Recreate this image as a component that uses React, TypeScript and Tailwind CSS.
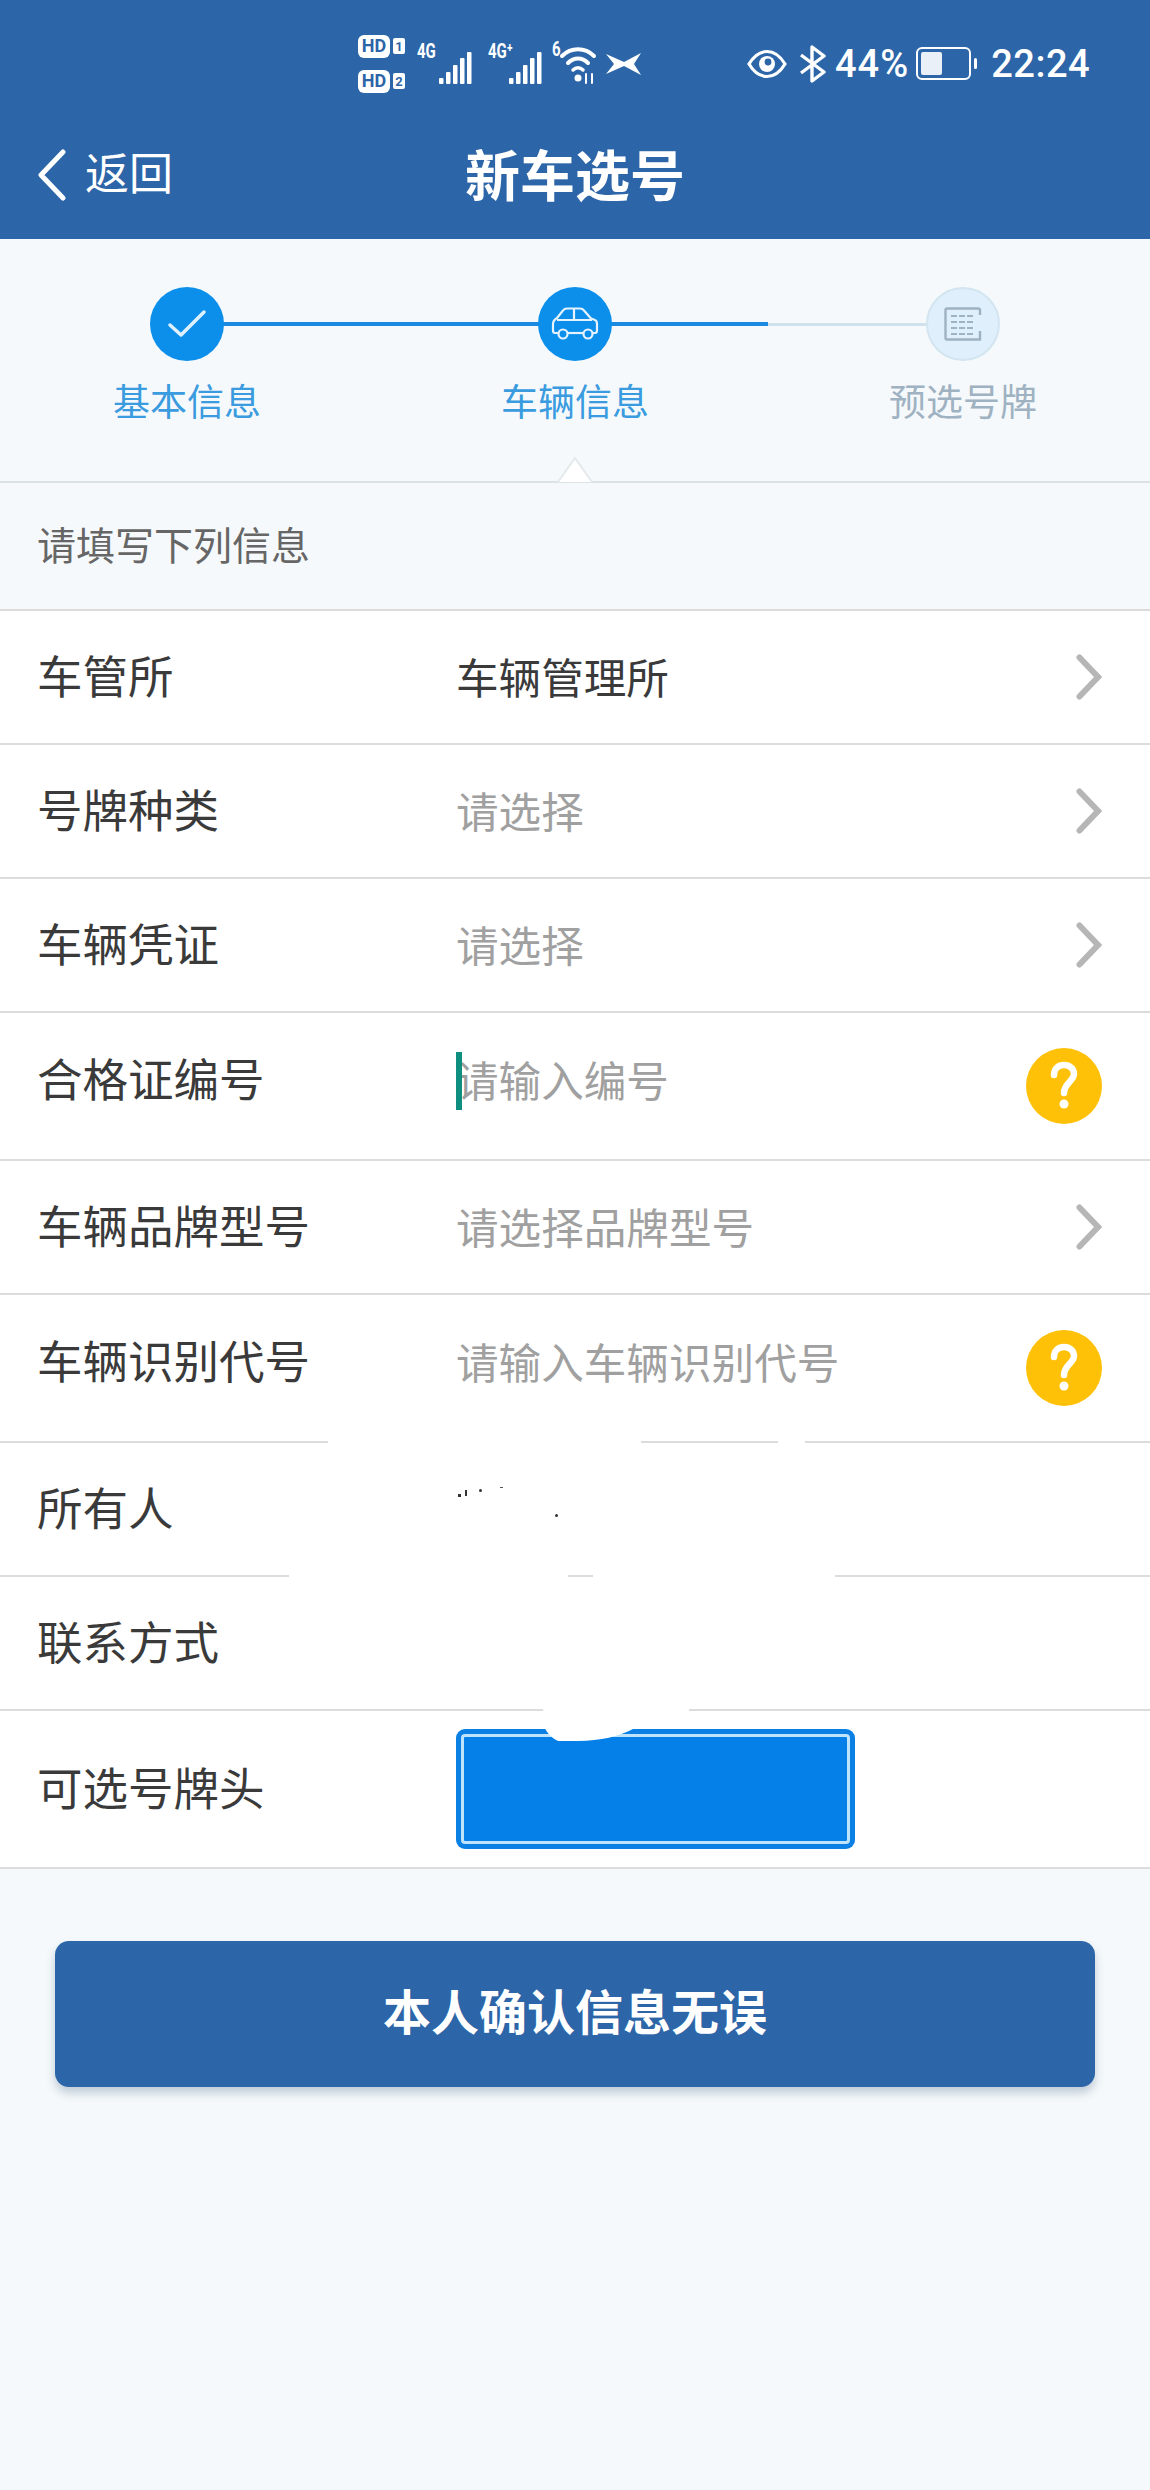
const CJK = "font-['Roboto','Noto_Sans_CJK_SC',sans-serif]";

function Chevron() {
  return (
    <svg width="26" height="46" viewBox="0 0 26 46" fill="none" className="shrink-0">
      <path d="M3.5 3.5 L22 23 L3.5 42.5" stroke="#b6b6b6" strokeWidth="6" strokeLinecap="round" strokeLinejoin="miter" />
    </svg>
  );
}

function Help() {
  return (
    <div className="flex h-[76px] w-[76px] shrink-0 items-center justify-center rounded-full bg-[#ffc107]">
      <svg width="30" height="50" viewBox="0 0 30 50" fill="none">
        <path d="M5 14 C5 7 10 4 15 4 C21 4 25 8 25 13 C25 20 15 22 15 32" stroke="#fff" strokeWidth="6.5" strokeLinecap="round" />
        <circle cx="15" cy="43" r="4.5" fill="#fff" />
      </svg>
    </div>
  );
}

type RowProps = {
  label: string;
  value?: string;
  dark?: boolean;
  chevron?: boolean;
  help?: boolean;
  cursor?: boolean;
  h: string;
};

function Row({ label, value, dark, chevron, help, cursor, h }: RowProps) {
  return (
    <div className={`relative flex items-center border-b-2 border-[#dcdcdc] bg-white pl-[37px] pr-[48px] ${h}`}>
      <div className={`w-[419px] shrink-0 text-[45.5px] leading-[60px] text-[#3a3a3a] ${help ? "-mt-[9px]" : "mt-[3px]"}`}>{label}</div>
      <div className={`flex-1 text-[42.6px] leading-[60px] ${dark ? "text-[#3a3a3a]" : "text-[#a0a0a0]"} ${help ? "-mt-[9px]" : "mt-[3px]"}`}>{value}</div>
      {chevron && <Chevron />}
      {help && <Help />}
      {cursor && <div className="absolute left-[456px] top-[39px] h-[58px] w-[6px] bg-[#0f8f7f]" />}
    </div>
  );
}

function StepIcon({ kind }: { kind: "check" | "car" | "plate" }) {
  if (kind === "check") {
    return (
      <div className="flex h-[74px] w-[74px] items-center justify-center rounded-full bg-[#0b8feb]">
        <svg width="40" height="30" viewBox="0 0 40 30" fill="none">
          <path d="M3 16 L14 26 L37 3" stroke="#dff1ff" strokeWidth="3.5" strokeLinecap="round" strokeLinejoin="round" />
        </svg>
      </div>
    );
  }
  if (kind === "car") {
    return (
      <div className="flex h-[74px] w-[74px] items-center justify-center rounded-full bg-[#0b8feb]">
        <svg width="48" height="36" viewBox="0 0 48 34" fill="none" stroke="#e4f3ff" strokeWidth="2.2" strokeLinejoin="round">
          <path d="M7.5 26 H4 C2.5 26 2 25 2 23.5 V17 C2 14 3.5 12.5 6 11 L12 3.5 C13 2 14 1.5 16 1.5 H29 C31 1.5 32 2 33 3.5 L40 11.5 L44 13 C45.5 13.5 46 15 46 17 V23.5 C46 25 45.5 26 44 26 H41.5" />
          <path d="M16.5 26 H32.5" />
          <path d="M6 13 H41 M23 2 V13" />
          <circle cx="12" cy="27" r="4.5" />
          <circle cx="37" cy="27" r="4.5" />
        </svg>
      </div>
    );
  }
  return (
    <div className="flex h-[74px] w-[74px] items-center justify-center rounded-full border-2 border-[#d3e5f1] bg-[#dfeffb]">
      <svg width="38" height="34" viewBox="0 0 38 34" fill="none" stroke="#9fb2c2">
        <path d="M36 8 V3 C36 2 35 1.5 34 1.5 H3 C2 1.5 1.5 2 1.5 3 V31 C1.5 32 2 32.5 3 32.5 H36 V24" strokeWidth="2.4" />
        <path d="M7 9 H31 M7 15 H31 M7 21 H31 M7 27 H31" strokeWidth="2" strokeDasharray="6 2" />
      </svg>
    </div>
  );
}

function Step({ label, kind, color }: { label: string; kind: "check" | "car" | "plate"; color: string }) {
  return (
    <div className="flex w-[74px] flex-col items-center">
      <StepIcon kind={kind} />
      <div className={`mt-[19px] whitespace-nowrap text-[37px] leading-[48px] ${color}`}>{label}</div>
    </div>
  );
}

function Signal() {
  return (
    <svg width="34" height="32" viewBox="0 0 34 32" fill="#fff">
      <rect x="0" y="26" width="4.5" height="6" rx="1" />
      <rect x="7" y="20" width="4.5" height="12" rx="1" />
      <rect x="14" y="13" width="4.5" height="19" rx="1" />
      <rect x="21" y="6" width="4.5" height="26" rx="1" />
      <rect x="28" y="0" width="4.5" height="32" rx="1" />
    </svg>
  );
}

function Hd({ n }: { n: string }) {
  return (
    <div className="flex items-center gap-[3px]">
      <span className="flex h-[23px] w-[32px] items-center justify-center rounded-[6px] bg-white text-[18px] font-bold leading-none text-[#2c65a8]">HD</span>
      <span className="flex h-[16px] w-[12px] items-center justify-center rounded-[2px] bg-white text-[13px] font-bold leading-none text-[#2c65a8]">{n}</span>
    </div>
  );
}

function Tiny({ children }: { children: string }) {
  return (
    <span className="absolute left-[2px] top-[-4px] origin-left scale-x-75 whitespace-nowrap text-[20px] font-bold leading-[22px]">{children}</span>
  );
}

function StatusBar() {
  return (
    <div className="flex h-[127px] items-center pl-[358px] text-white">
      <div className="flex flex-col gap-[12px]">
        <Hd n="1" />
        <Hd n="2" />
      </div>
      <div className="relative ml-[10px] h-[40px] w-[58px]">
        <Tiny>4G</Tiny>
        <div className="absolute bottom-0 right-0"><Signal /></div>
      </div>
      <div className="relative ml-[13px] h-[40px] w-[57px]">
        <Tiny>4G⁺</Tiny>
        <div className="absolute bottom-0 right-0"><Signal /></div>
      </div>
      <div className="relative ml-[9px] h-[40px] w-[45px]">
        <span className="absolute left-0 top-[-6px] origin-left scale-x-75 text-[20px] font-bold leading-[22px]">6</span>
        <svg className="absolute left-[7px] top-0" width="38" height="40" viewBox="0 0 38 40" fill="none" stroke="#fff" strokeLinecap="round">
          <path d="M3 12 C12 3 26 3 35 12" strokeWidth="4" />
          <path d="M9 19 C15 13 23 13 29 19" strokeWidth="4" />
          <path d="M14 26 C17 23 21 23 24 26" strokeWidth="3.5" />
          <circle cx="19" cy="34" r="3.5" fill="#fff" stroke="none" />
          <path d="M27 30 V39 M33 30 V39" strokeWidth="2" />
        </svg>
      </div>
      <svg className="ml-[9px]" width="36" height="24" viewBox="0 0 36 24" fill="#fff">
        <path d="M0 2 L18 10 L35 1 L28 12 L35 23 L18 14 L0 22 L8 12 Z" />
      </svg>
      <svg className="ml-[105px]" width="40" height="30" viewBox="0 0 40 30" fill="none">
        <path d="M2 15 C8 5 14 2.5 20 2.5 C26 2.5 32 5 38 15 C32 25 26 27.5 20 27.5 C14 27.5 8 25 2 15 Z" stroke="#fff" strokeWidth="3.2" />
        <circle cx="20" cy="15" r="8" fill="#fff" />
        <circle cx="21" cy="13" r="3.4" fill="#2c65a8" />
      </svg>
      <svg className="ml-[12px]" width="28" height="38" viewBox="0 0 28 38" fill="none">
        <path d="M2 10 L25 27 L13 36 V2 L25 11 L2 28" stroke="#fff" strokeWidth="3.4" strokeLinejoin="round" />
      </svg>
      <span className="ml-[8px] font-['Roboto',sans-serif] text-[38px] font-medium leading-none tracking-[1px]">44%</span>
      <div className="ml-[7px] flex items-center">
        <div className="flex h-[33px] w-[55px] items-center rounded-[6px] border-[2.5px] border-white p-[3px]">
          <div className="h-full w-[21px] rounded-[2px] bg-[#e9f0f8]" />
        </div>
        <div className="ml-[3px] h-[11px] w-[3px] rounded-sm bg-white" />
      </div>
      <span className="ml-[14px] font-['Roboto',sans-serif] text-[38px] font-medium leading-none tracking-[0.5px]">22:24</span>
    </div>
  );
}

function Redaction() {
  return (
    <>
      <div className="absolute left-[328px] top-[1440px] h-[5px] w-[313px] bg-white" />
      <div className="absolute left-[778px] top-[1440px] h-[5px] w-[27px] bg-white" />
      <div className="absolute left-[289px] top-[1574px] h-[5px] w-[279px] bg-white" />
      <div className="absolute left-[593px] top-[1574px] h-[5px] w-[242px] bg-white" />
      <svg className="absolute left-[540px] top-[1707px]" width="152" height="36" viewBox="0 0 152 36" fill="#fff">
        <path d="M3 0 H149 V5 L148 5 L93 22 C80 29 60 34 38 34 H18 C10 30 6 24 4 19 Z" />
      </svg>
      <div className="absolute left-[458px] top-[1494px] h-[3px] w-[3px] bg-[#333]" />
      <div className="absolute left-[465px] top-[1490px] h-[6px] w-[2px] bg-[#333]" />
      <div className="absolute left-[479px] top-[1489px] h-[3px] w-[3px] rounded-full bg-[#333]" />
      <div className="absolute left-[500px] top-[1487px] h-[1px] w-[3px] bg-[#555]" />
      <div className="absolute left-[555px] top-[1514px] h-[3px] w-[3px] rounded-full bg-[#333]" />
    </>
  );
}

export default function App() {
  return (
    <div className={`${CJK} relative h-[2490px] w-[1150px] overflow-hidden bg-[#f5f9fb]`}>
      <header className="h-[239px] bg-[#2c65a8]">
        <StatusBar />
        <div className="relative flex h-[112px] items-center justify-center pb-[12px]">
          <div className="absolute left-[37px] top-[20px] flex items-center gap-[18px] text-white">
            <svg width="30" height="52" viewBox="0 0 30 52" fill="none">
              <path d="M26 3 L4 26 L26 49" stroke="#fff" strokeWidth="5" strokeLinecap="round" strokeLinejoin="round" />
            </svg>
            <span className="text-[44px] leading-[56px]">返回</span>
          </div>
          <h1 className="text-[55px] font-bold leading-[70px] text-white">新车选号</h1>
        </div>
      </header>

      <section className="relative h-[244px] border-b-2 border-[#dce3e6]">
        <div className="absolute left-[186px] top-[83px] h-[4px] w-[582px] bg-[#1a8ae0]" />
        <div className="absolute left-[768px] top-[84px] h-[3px] w-[160px] bg-[#cfe1ec]" />
        <div className="absolute left-[150px] top-[48px]"><Step label="基本信息" kind="check" color="text-[#3a9bdf]" /></div>
        <div className="absolute left-[538px] top-[48px]"><Step label="车辆信息" kind="car" color="text-[#3a9bdf]" /></div>
        <div className="absolute left-[926px] top-[48px]"><Step label="预选号牌" kind="plate" color="text-[#9fb2c2]" /></div>
        <svg className="absolute bottom-[-2px] left-[557px]" width="36" height="26" viewBox="0 0 36 26">
          <path d="M1 25 L18 1 L35 25" fill="#fff" stroke="#e4e9ec" strokeWidth="2" />
        </svg>
      </section>

      <div className="flex h-[128px] items-center border-b-2 border-[#dcdcdc] pl-[37px] pt-[2px] text-[39px] text-[#666]">请填写下列信息</div>

      <Row h="h-[134px]" label="车管所" value="车辆管理所" dark chevron />
      <Row h="h-[134px]" label="号牌种类" value="请选择" chevron />
      <Row h="h-[134px]" label="车辆凭证" value="请选择" chevron />
      <Row h="h-[148px]" label="合格证编号" value="请输入编号" help cursor />
      <Row h="h-[134px]" label="车辆品牌型号" value="请选择品牌型号" chevron />
      <Row h="h-[148px]" label="车辆识别代号" value="请输入车辆识别代号" help />
      <Row h="h-[134px]" label="所有人" />
      <Row h="h-[134px]" label="联系方式" />

      <div className="flex h-[158px] items-center border-b-2 border-[#dcdcdc] bg-white pl-[37px]">
        <div className="mt-[4px] w-[419px] text-[45.5px] leading-[60px] text-[#3a3a3a]">可选号牌头</div>
        <div className="h-[120px] w-[399px] rounded-[9px] bg-[#0a80e4] p-[5px]">
          <div className="h-full w-full rounded-[4px] border-[3px] border-[#bfe3fb] bg-[#0580e8]" />
        </div>
      </div>

      <button className="mx-[55px] mt-[72px] flex h-[146px] w-[1040px] items-center justify-center rounded-[14px] bg-[#2c65a8] text-[48px] font-bold text-white shadow-[0_6px_10px_rgba(70,100,130,0.3)]">
        本人确认信息无误
      </button>

      <Redaction />
    </div>
  );
}
